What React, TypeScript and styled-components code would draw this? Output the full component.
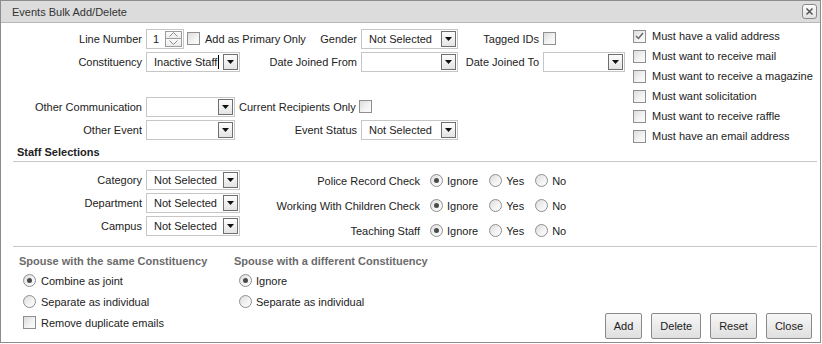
import React from 'react';
import styled, { createGlobalStyle } from 'styled-components';

const Global = createGlobalStyle`
  html, body { margin: 0; padding: 0; background: #fff; }
  body {
    font-family: "Liberation Sans", Arial, sans-serif;
    font-size: 11px;
    color: #222;
  }
  * { box-sizing: border-box; }
`;

const Dialog = styled.div`
  width: 821px;
  height: 343px;
  border: 1px solid #8c8c8c;
  background: #fff;
  display: flex;
  flex-direction: column;
`;

const TitleBar = styled.div`
  height: 22px;
  flex: none;
  background: #dcdcdc;
  border-bottom: 1px solid #b9b9b9;
  display: flex;
  align-items: center;
  justify-content: space-between;
  padding: 0 3px 0 11px;
`;

const Title = styled.span`
  color: #333;
  font-size: 11px;
`;

const CloseBtn = styled.span`
  width: 15px;
  height: 15px;
  border: 1px solid #8a8a8a;
  border-radius: 3px;
  background: linear-gradient(#fbfbfb, #e2e2e2);
  display: flex;
  align-items: center;
  justify-content: center;
`;

const TopSection = styled.div`
  display: flex;
  flex: none;
`;

const FormBlock = styled.div`
  width: 632px;
  padding-top: 4px;
  display: flex;
  flex-direction: column;
`;

const Row = styled.div<{ $cols: string; $h?: number }>`
  display: grid;
  grid-template-columns: ${p => p.$cols};
  column-gap: 4px;
  align-items: center;
  height: ${p => p.$h ?? 23}px;
`;

const Spacer = styled.div<{ $h: number }>`
  height: ${p => p.$h}px;
`;

const Label = styled.span`
  text-align: right;
  white-space: nowrap;
`;

const Inline = styled.div<{ $gap: number }>`
  display: flex;
  align-items: center;
  gap: ${p => p.$gap}px;
  white-space: nowrap;
`;

const Box = styled.span`
  width: 13px;
  height: 13px;
  flex: none;
  border: 1px solid #8f8f8f;
  background: linear-gradient(135deg, #dcdcdc 0%, #f4f4f4 60%, #fbfbfb 100%);
  display: inline-flex;
  align-items: center;
  justify-content: center;
`;

const Round = styled(Box)`
  border-radius: 50%;
`;

const Dot = styled.span`
  width: 5px;
  height: 5px;
  border-radius: 50%;
  background: #4a4a4a;
`;

const SelectBox = styled.div<{ $w: number }>`
  width: ${p => p.$w}px;
  height: 20px;
  border: 1px solid #c6c6c6;
  background: #fff;
  display: flex;
  align-items: center;
  padding: 1px;
`;

const SelectText = styled.span`
  flex: 1;
  padding-left: 6px;
  white-space: nowrap;
  overflow: hidden;
  display: flex;
  align-items: center;
`;

const Caret = styled.span`
  width: 1px;
  height: 14px;
  background: #000;
  margin-left: 1px;
`;

const ArrowBtn = styled.span`
  width: 15px;
  height: 16px;
  flex: none;
  border: 1px solid #6f6f6f;
  background: linear-gradient(#fdfdfd, #e4e4e4);
  display: flex;
  align-items: center;
  justify-content: center;
`;

const SpinBox = styled.div`
  width: 38px;
  height: 20px;
  border: 1px solid #c6c6c6;
  display: flex;
  align-items: stretch;
  padding: 1px;
`;

const SpinText = styled.span`
  flex: 1;
  padding-left: 5px;
  display: flex;
  align-items: center;
`;

const SpinButtons = styled.div`
  width: 17px;
  display: flex;
  flex-direction: column;
`;

const SpinHalf = styled.span`
  flex: 1;
  border: 1px solid #9c9c9c;
  background: linear-gradient(#fcfcfc, #ececec);
  display: flex;
  align-items: center;
  justify-content: center;
  & + & { border-top: none; }
`;

const OptionList = styled.div`
  padding-top: 3px;
  display: flex;
  flex-direction: column;
`;

const OptionRow = styled.div`
  height: 20px;
  display: flex;
  align-items: center;
  gap: 6px;
  white-space: nowrap;
`;

const Heading = styled.div`
  margin: 0 3px 0 12px;
  padding: 0 0 3px 4px;
  line-height: 12px;
  font-weight: bold;
  color: #222;
  border-bottom: 1px solid #c8c8c8;
`;

const StaffSection = styled.div`
  display: flex;
  padding: 6px 0 3px;
  flex: none;
`;

const Column = styled.div`
  display: flex;
  flex-direction: column;
`;

const Divider = styled.div`
  margin: 0 3px 0 12px;
  border-top: 1px solid #c8c8c8;
`;

const RadioSet = styled.div`
  display: flex;
  align-items: center;
  gap: 11px;
  margin-left: 6px;
`;

const SpouseSection = styled.div`
  flex: 1;
  display: flex;
  padding: 7px 8px 3px 18px;
`;

const SpouseCol = styled.div<{ $w?: number; $indent: number; $gap: number }>`
  width: ${p => (p.$w ? `${p.$w}px` : 'auto')};
  display: flex;
  flex-direction: column;
  --indent: ${p => p.$indent}px;
  --gap: ${p => p.$gap}px;
`;

const SpouseHead = styled.div`
  line-height: 14px;
  font-weight: bold;
  color: #6b6b6b;
  margin-bottom: 2px;
  white-space: nowrap;
`;

const SpouseItem = styled.div`
  height: 21px;
  display: flex;
  align-items: center;
  padding-left: var(--indent);
  gap: var(--gap);
  white-space: nowrap;
`;

const Buttons = styled.div`
  margin-left: auto;
  align-self: flex-end;
  display: flex;
  gap: 9px;
`;

const Button = styled.button`
  height: 26px;
  padding: 0 8px;
  border: 1px solid #8a8a8a;
  border-radius: 2px;
  background: linear-gradient(#f7f7f7, #dfdfdf);
  font-family: "Liberation Sans", Arial, sans-serif;
  font-size: 11px;
  color: #222;
`;

const Tri = () => (
  <svg width="7" height="4" viewBox="0 0 7 4">
    <polygon points="0,0 7,0 3.5,4" fill="#111" />
  </svg>
);

const Select = ({ w, value, caret }: { w: number; value?: string; caret?: boolean }) => (
  <SelectBox $w={w}>
    <SelectText>
      {value}
      {caret && <Caret />}
    </SelectText>
    <ArrowBtn>
      <Tri />
    </ArrowBtn>
  </SelectBox>
);

const Check = ({ checked }: { checked?: boolean }) => (
  <Box>
    {checked && (
      <svg width="9" height="8" viewBox="0 0 9 8">
        <polyline points="1,4 3.5,6.5 8,1" fill="none" stroke="#666" strokeWidth="1.4" />
      </svg>
    )}
  </Box>
);

const Radio = ({ on }: { on?: boolean }) => <Round>{on && <Dot />}</Round>;

const Spinner = () => (
  <SpinBox>
    <SpinText>1</SpinText>
    <SpinButtons>
      <SpinHalf>
        <svg width="9" height="5" viewBox="0 0 9 5">
          <polyline points="0.5,4.5 4.5,0.5 8.5,4.5" fill="none" stroke="#8a8a8a" strokeWidth="1" />
        </svg>
      </SpinHalf>
      <SpinHalf>
        <svg width="9" height="5" viewBox="0 0 9 5">
          <polyline points="0.5,0.5 4.5,4.5 8.5,0.5" fill="none" stroke="#8a8a8a" strokeWidth="1" />
        </svg>
      </SpinHalf>
    </SpinButtons>
  </SpinBox>
);

const options = [
  { label: 'Must have a valid address', checked: true },
  { label: 'Must want to receive mail' },
  { label: 'Must want to receive a magazine' },
  { label: 'Must want solicitation' },
  { label: 'Must want to receive raffle' },
  { label: 'Must have an email address' },
];

const staffSelects = ['Category', 'Department', 'Campus'];
const staffChecks = ['Police Record Check', 'Working With Children Check', 'Teaching Staff'];

export default function App() {
  return (
    <>
      <Global />
      <Dialog>
        <TitleBar>
          <Title>Events Bulk Add/Delete</Title>
          <CloseBtn>
            <svg width="9" height="9" viewBox="0 0 9 9">
              <path d="M1.5 1.5 L7.5 7.5 M7.5 1.5 L1.5 7.5" stroke="#555" strokeWidth="1.5" />
            </svg>
          </CloseBtn>
        </TitleBar>

        <TopSection>
          <FormBlock>
            <Row $cols="141px 165px 42px 97px 77px auto">
              <Label>Line Number</Label>
              <Inline $gap={3}>
                <Spinner />
                <Inline $gap={5}>
                  <Check />
                  <span>Add as Primary Only</span>
                </Inline>
              </Inline>
              <Label>Gender</Label>
              <Select w={97} value="Not Selected" />
              <Label>Tagged IDs</Label>
              <Check />
            </Row>
            <Row $cols="141px 94px 113px 97px 77px auto">
              <Label>Constituency</Label>
              <Select w={94} value="Inactive Staff" caret />
              <Label>Date Joined From</Label>
              <Select w={97} />
              <Label>Date Joined To</Label>
              <Select w={82} />
            </Row>
            <Spacer $h={22} />
            <Row $cols="141px 89px auto">
              <Label>Other Communication</Label>
              <Select w={89} />
              <Inline $gap={3}>
                <span>Current Recipients Only</span>
                <Check />
              </Inline>
            </Row>
            <Row $cols="141px 89px 118px 97px">
              <Label>Other Event</Label>
              <Select w={89} />
              <Label>Event Status</Label>
              <Select w={97} value="Not Selected" />
            </Row>
          </FormBlock>
          <OptionList>
            {options.map(o => (
              <OptionRow key={o.label}>
                <Check checked={o.checked} />
                <span>{o.label}</span>
              </OptionRow>
            ))}
          </OptionList>
        </TopSection>

        <Heading>Staff Selections</Heading>

        <StaffSection>
          <Column>
            {staffSelects.map(s => (
              <Row key={s} $cols="141px 94px">
                <Label>{s}</Label>
                <Select w={94} value="Not Selected" />
              </Row>
            ))}
          </Column>
          <Column>
            {staffChecks.map(s => (
              <Row key={s} $cols="180px auto" $h={25}>
                <Label>{s}</Label>
                <RadioSet>
                  <Inline $gap={4}>
                    <Radio on />
                    <span>Ignore</span>
                  </Inline>
                  <Inline $gap={4}>
                    <Radio />
                    <span>Yes</span>
                  </Inline>
                  <Inline $gap={4}>
                    <Radio />
                    <span>No</span>
                  </Inline>
                </RadioSet>
              </Row>
            ))}
          </Column>
        </StaffSection>

        <Divider />

        <SpouseSection>
          <SpouseCol $w={215} $indent={4} $gap={5}>
            <SpouseHead>Spouse with the same Constituency</SpouseHead>
            <SpouseItem>
              <Radio on />
              <span>Combine as joint</span>
            </SpouseItem>
            <SpouseItem>
              <Radio />
              <span>Separate as individual</span>
            </SpouseItem>
            <SpouseItem>
              <Check />
              <span>Remove duplicate emails</span>
            </SpouseItem>
          </SpouseCol>
          <SpouseCol $indent={5} $gap={4}>
            <SpouseHead>Spouse with a different Constituency</SpouseHead>
            <SpouseItem>
              <Radio on />
              <span>Ignore</span>
            </SpouseItem>
            <SpouseItem>
              <Radio />
              <span>Separate as individual</span>
            </SpouseItem>
          </SpouseCol>
          <Buttons>
            <Button>Add</Button>
            <Button>Delete</Button>
            <Button>Reset</Button>
            <Button>Close</Button>
          </Buttons>
        </SpouseSection>
      </Dialog>
    </>
  );
}
